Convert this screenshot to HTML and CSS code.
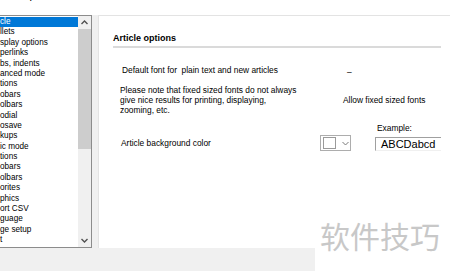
FILE: index.html
```html
<!DOCTYPE html>
<html lang="en">

<head>
    <meta charset="UTF-8">
    <title>Options</title>
    <link rel="stylesheet" href="styles.css">
</head>

<body>

    <div class="titlebar"><span>Options</span></div>

    <div class="main">
        <!-- category list, scrolled so the left part is hidden -->
        <div class="listbox">
            <ul class="items">
                <li class="selected">cle</li>
                <li>llets</li>
                <li>splay options</li>
                <li>perlinks</li>
                <li>bs, indents</li>
                <li>anced mode</li>
                <li>tions</li>
                <li>obars</li>
                <li>olbars</li>
                <li>odial</li>
                <li>osave</li>
                <li>kups</li>
                <li>ic mode</li>
                <li>tions</li>
                <li>obars</li>
                <li>olbars</li>
                <li>orites</li>
                <li>phics</li>
                <li>ort CSV</li>
                <li>guage</li>
                <li>ge setup</li>
                <li>t</li>
            </ul>
            <div class="scrollbar">
                <div class="arrow">
                    <svg width="7" height="5" viewBox="0 0 7 5"><path d="M0.5 4 L3.5 1 L6.5 4" fill="none" stroke="#505050" stroke-width="1.4"/></svg>
                </div>
                <div class="thumb"></div>
                <div class="track"></div>
                <div class="arrow">
                    <svg width="7" height="5" viewBox="0 0 7 5"><path d="M0.5 1 L3.5 4 L6.5 1" fill="none" stroke="#505050" stroke-width="1.4"/></svg>
                </div>
            </div>
        </div>

        <div class="panel">
            <h2>Article options</h2>

            <div class="options">
                <div class="row row-font">
                    <div class="label">Default font for&nbsp; plain text and new articles</div>
                    <div class="value dash">&ndash;</div>
                </div>

                <div class="row row-note">
                    <div class="label note">Please note that fixed sized fonts do not always<br>give nice results for printing, displaying,<br>zooming, etc.</div>
                    <div class="value allow">Allow fixed sized fonts</div>
                </div>

                <div class="row row-color">
                    <div class="label bg-label">Article background color</div>
                    <div class="value color-value">
                        <div class="color-picker">
                            <span class="swatch"></span>
                            <svg width="7" height="5" viewBox="0 0 7 5"><path d="M0.5 1 L3.5 4 L6.5 1" fill="none" stroke="#7a7a7a" stroke-width="1"/></svg>
                        </div>
                        <div class="example">
                            <div class="example-label">Example:</div>
                            <div class="example-box">ABCDabcd</div>
                        </div>
                    </div>
                </div>
            </div>
        </div>
    </div>

    <div class="watermark">软件技巧</div>

</body>

</html>
```

FILE: styles.css
```css
body {
    margin: 0;
    padding: 0;
    width: 450px;
    height: 271px;
    overflow: hidden;
    position: relative;
    background-color: #f0f0f0;
    font-family: "Liberation Sans", Arial, sans-serif;
    font-size: 8.4px;
    color: #000;
}

.titlebar {
    height: 15px;
    background-color: #fff;
    overflow: hidden;
}

.titlebar span {
    display: block;
    margin: -10px 0 0 21px;
    font-size: 11px;
    line-height: 11px;
}

.main {
    display: flex;
    height: 233px;
}

.listbox {
    width: 92px;
    height: 233px;
    box-sizing: border-box;
    display: flex;
    background-color: #fff;
    border: 1px solid #8c8c8c;
    border-left: 0;
}

.items {
    flex: 1;
    list-style: none;
    margin: 0;
    padding: 1px 0 0 0;
    overflow: hidden;
    font-size: 8.2px;
}

.items li {
    height: 10.4px;
    line-height: 10.4px;
    white-space: nowrap;
}

.items li.selected {
    background-color: #0078d7;
    color: #fff;
}

.scrollbar {
    width: 13px;
    display: flex;
    flex-direction: column;
    background-color: #f0f0f0;
}

.arrow {
    height: 13px;
    display: flex;
    align-items: center;
    justify-content: center;
}

.thumb {
    height: 120px;
    background-color: #cdcdcd;
}

.track {
    flex: 1;
}

.panel {
    flex: 1;
    margin-left: 6px;
    padding: 17px 9px 0 14px;
    background-color: #fff;
    border-top: 1px solid #e3e3e3;
    border-left: 1px solid #e3e3e3;
}

h2 {
    margin: 0;
    padding-bottom: 2px;
    font-size: 9px;
    line-height: 11px;
    font-weight: bold;
    border-bottom: 2px solid #dadada;
}

.options {
    margin-left: 7px;
}

.row {
    display: flex;
}

.label {
    width: 200px;
    flex-shrink: 0;
    line-height: 10px;
}

.row-font {
    margin-top: 12px;
    height: 20px;
    align-items: center;
}

.row-font .label {
    padding-left: 2px;
    width: 198px;
}

.dash {
    padding: 3px 0 0 27px;
}

.row-note {
    margin-top: 5px;
    align-items: center;
}

.allow {
    padding: 0 0 1px 23px;
}

.row-color {
    margin-top: 8px;
    align-items: flex-end;
}

.bg-label {
    padding-left: 1px;
    width: 199px;
    margin-bottom: 3px;
}

.color-value {
    display: flex;
    align-items: flex-end;
}

.color-picker {
    width: 31px;
    height: 16px;
    box-sizing: border-box;
    border: 1px solid #adadad;
    display: flex;
    align-items: center;
    padding-left: 2px;
    gap: 6px;
}

.swatch {
    width: 11px;
    height: 10px;
    border: 1px solid #9a9a9a;
    background-color: #fff;
}

.example {
    margin-left: 24px;
}

.example-label {
    padding-left: 2px;
    line-height: 10px;
    margin-bottom: 4px;
}

.example-box {
    width: 66px;
    height: 14px;
    box-sizing: border-box;
    padding-left: 5px;
    font-size: 11px;
    line-height: 13px;
    border-top: 1px solid #a0a0a0;
    border-left: 1px solid #a0a0a0;
    border-bottom: 1px solid #f0f0f0;
}

.watermark {
    position: absolute;
    right: 0;
    bottom: 0;
    width: 130px;
    height: 51px;
    padding-left: 5px;
    background-color: #fff;
    color: #c8c8c8;
    font-family: "Noto Sans CJK SC", sans-serif;
    font-size: 30px;
    line-height: 30px;
}
```
